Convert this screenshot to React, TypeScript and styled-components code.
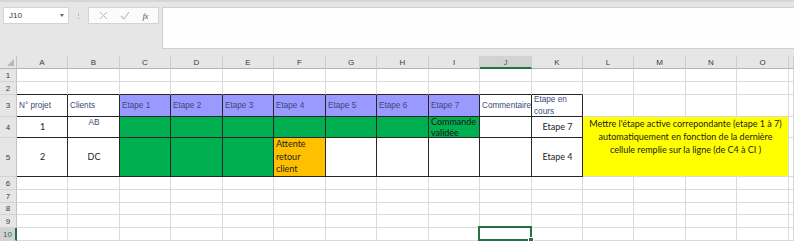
import React from 'react';
import styled, { createGlobalStyle, css } from 'styled-components';

const GlobalStyle = createGlobalStyle`
  html, body { margin: 0; padding: 0; background: #e6e6e6; }
  body { font-family: "Liberation Sans", Arial, sans-serif; }
`;

const COLS = ['A', 'B', 'C', 'D', 'E', 'F', 'G', 'H', 'I', 'J', 'K', 'L', 'M', 'N', 'O', 'P'];
const COL_WIDTHS = [51, 52, 51, 52, 51, 52, 51, 52, 51, 52, 51, 51, 52, 51, 52];
const ROW_HEIGHTS = [13, 13, 22, 21, 39, 13, 13, 12, 13, 13];

const GRID = '#dadada';
const DARK = '#262626';
const HEAD_TXT = '#3b4a78';
const GREEN = '#217346';

type HAlign = 'left' | 'center' | 'right';
type VAlign = 'top' | 'center' | 'bottom';

interface Spec {
  text?: string;
  fill?: string;
  font?: 'arial' | 'calibri';
  h?: HAlign;
  v?: VAlign;
  color?: string;
  lh?: number;
}

const LAV = '#9999ff';
const GRN = '#00b050';
const ORA = '#ffc000';

const hdr = (text: string): Spec => ({ text, font: 'arial', h: 'left', v: 'center', color: HEAD_TXT });

const SPECS: Record<string, Spec> = {
  A3: hdr('N° projet'),
  B3: hdr('Clients'),
  C3: { ...hdr('Etape 1'), fill: LAV },
  D3: { ...hdr('Etape 2'), fill: LAV },
  E3: { ...hdr('Etape 3'), fill: LAV },
  F3: { ...hdr('Etape 4'), fill: LAV },
  G3: { ...hdr('Etape 5'), fill: LAV },
  H3: { ...hdr('Etape 6'), fill: LAV },
  I3: { ...hdr('Etape 7'), fill: LAV },
  J3: hdr('Commentaire'),
  K3: hdr('Etape en\ncours'),
  A4: { text: '1', font: 'calibri', h: 'center', v: 'center', color: '#222' },
  B4: { text: 'AB', font: 'arial', h: 'center', v: 'top', color: HEAD_TXT },
  C4: { fill: GRN },
  D4: { fill: GRN },
  E4: { fill: GRN },
  F4: { fill: GRN },
  G4: { fill: GRN },
  H4: { fill: GRN },
  I4: { text: 'Commande\nvalidée', fill: GRN, font: 'calibri', h: 'left', v: 'top', color: '#141414', lh: 10.5 },
  K4: { text: 'Etape 7', font: 'calibri', h: 'center', v: 'center', color: '#222' },
  A5: { text: '2', font: 'calibri', h: 'center', v: 'center', color: '#222' },
  B5: { text: 'DC', font: 'calibri', h: 'center', v: 'center', color: '#222' },
  C5: { fill: GRN },
  D5: { fill: GRN },
  E5: { fill: GRN },
  F5: { text: 'Attente\nretour\nclient', fill: ORA, font: 'calibri', h: 'left', v: 'top', color: '#1c1c1c' },
  K5: { text: 'Etape 4', font: 'calibri', h: 'center', v: 'center', color: '#222' },
};

const Page = styled.div`
  width: 794px;
  height: 241px;
  overflow: hidden;
  background: #e6e6e6;
`;

const TopBar = styled.div`
  height: 56px;
  box-sizing: border-box;
  border-top: 2px solid #d5d5d5;
  padding-top: 5px;
  display: flex;
  align-items: flex-start;
`;

const NameBox = styled.div`
  margin-left: 3px;
  width: 66px;
  height: 17px;
  box-sizing: border-box;
  background: #ffffff;
  border: 1px solid #d3d3d3;
  display: flex;
  align-items: center;
  justify-content: space-between;
  padding: 0 4px 0 5px;
  font-size: 8px;
  color: #333;
`;

const Caret = styled.span`
  width: 0;
  height: 0;
  border-left: 2.5px solid transparent;
  border-right: 2.5px solid transparent;
  border-top: 3px solid #666;
`;

const Dots = styled.div`
  width: 19px;
  height: 17px;
  display: flex;
  flex-direction: column;
  align-items: center;
  justify-content: center;
  gap: 1.5px;
  & > span {
    width: 1px;
    height: 1px;
    background: #a8a8a8;
  }
`;

const FxBox = styled.div`
  width: 71px;
  height: 17px;
  box-sizing: border-box;
  background: #fbfbfb;
  border: 1px solid #d3d3d3;
  display: flex;
  align-items: center;
  justify-content: space-around;
  padding: 0 4px;
`;

const Fx = styled.span`
  font-family: "Liberation Serif", serif;
  font-style: italic;
  font-size: 9px;
  color: #555;
  letter-spacing: -0.5px;
`;

const FormulaInput = styled.div`
  margin-left: 3px;
  flex: 1;
  height: 42px;
  box-sizing: border-box;
  background: #fdfefd;
  border: 1px solid #d0d0d0;
  border-right: none;
`;

const Sheet = styled.div`
  display: grid;
  grid-template-columns: 17px ${COL_WIDTHS.map((w) => `${w}px`).join(' ')} 1fr;
  grid-template-rows: 13px ${ROW_HEIGHTS.map((h) => `${h}px`).join(' ')} 1fr;
  background: #ffffff;
`;

const HeaderBase = css`
  box-sizing: border-box;
  background: #e6e6e6;
  font-family: "Liberation Sans", Arial, sans-serif;
  font-size: 8px;
  color: #3a3a3a;
  display: flex;
  align-items: center;
  justify-content: center;
  overflow: hidden;
`;

const Corner = styled.div`
  ${HeaderBase};
  position: relative;
  border-right: 1px solid #c4c4c4;
  border-bottom: 1px solid #b4b4b4;
  &::after {
    content: '';
    position: absolute;
    right: 2px;
    bottom: 2px;
    width: 0;
    height: 0;
    border-left: 7px solid transparent;
    border-bottom: 7px solid #b8b8b8;
  }
`;

const ColHead = styled.div<{ $active?: boolean }>`
  ${HeaderBase};
  border-right: 1px solid #cdcdcd;
  border-bottom: 1px solid #b4b4b4;
  padding-top: 1px;
  ${(p) =>
    p.$active &&
    css`
      background: #d2d2d2;
      color: ${GREEN};
      border-bottom: 2px solid ${GREEN};
    `}
`;

const RowHead = styled.div<{ $active?: boolean }>`
  ${HeaderBase};
  border-right: 1px solid #c4c4c4;
  border-bottom: 1px solid #d4d4d4;
  ${(p) =>
    p.$active &&
    css`
      background: #d2d2d2;
      color: ${GREEN};
      border-right: 2px solid ${GREEN};
    `}
`;

const Cell = styled.div<{
  $fill?: string;
  $rb: string;
  $bb: string;
  $font: 'arial' | 'calibri';
  $h: HAlign;
  $v: VAlign;
  $color: string;
  $lh?: number;
  $selected?: boolean;
}>`
  position: relative;
  box-sizing: border-box;
  background: ${(p) => p.$fill || '#ffffff'};
  border-right: 1px solid ${(p) => p.$rb};
  border-bottom: 1px solid ${(p) => p.$bb};
  display: flex;
  flex-direction: column;
  justify-content: ${(p) => (p.$v === 'top' ? 'flex-start' : p.$v === 'center' ? 'center' : 'flex-end')};
  align-items: ${(p) => (p.$h === 'left' ? 'flex-start' : p.$h === 'center' ? 'center' : 'flex-end')};
  padding: 0 1px 0 2px;
  white-space: pre-line;
  overflow: hidden;
  color: ${(p) => p.$color};
  ${(p) =>
    p.$font === 'arial'
      ? css`
          font-family: "Liberation Sans", Arial, sans-serif;
          font-size: 8.2px;
          line-height: 12px;
        `
      : css`
          font-family: Lato, "Open Sans", sans-serif;
          font-size: 9px;
          line-height: ${p.$lh ? `${p.$lh}px` : '12.5px'};
        `}
  ${(p) =>
    p.$selected &&
    css`
      overflow: visible;
      &::after {
        content: '';
        position: absolute;
        left: -2px;
        top: -2px;
        right: -1px;
        bottom: -1px;
        border: 2px solid ${GREEN};
      }
      &::before {
        content: '';
        position: absolute;
        right: -3px;
        bottom: -3px;
        width: 4px;
        height: 4px;
        background: ${GREEN};
        border: 1px solid #fff;
        z-index: 2;
      }
    `}
`;

const Note = styled.div`
  grid-column: 13 / span 4;
  grid-row: 5 / span 2;
  box-sizing: border-box;
  background: #ffff00;
  border-right: 1px solid ${GRID};
  border-bottom: 1px solid ${GRID};
  display: flex;
  flex-direction: column;
  align-items: center;
  font-family: Lato, "Open Sans", sans-serif;
  font-size: 9px;
  line-height: 13px;
  color: #1a1a1a;
  text-align: center;
`;

const XIcon = () => (
  <svg width="9" height="9" viewBox="0 0 9 9">
    <path d="M1 1 L8 8 M8 1 L1 8" stroke="#b9b9b9" strokeWidth="1" fill="none" />
  </svg>
);

const CheckIcon = () => (
  <svg width="10" height="9" viewBox="0 0 10 9">
    <path d="M1 5 L4 8 L9 1" stroke="#b9b9b9" strokeWidth="1.1" fill="none" />
  </svg>
);

const NOTE_SPAN = new Set(['L4', 'M4', 'N4', 'O4', 'L5', 'M5', 'N5', 'O5']);

function borderFor(ci: number, row: number) {
  const inBox = ci <= 10 && row >= 3 && row <= 5;
  const rb = inBox ? DARK : GRID;
  const bb = inBox || (ci <= 10 && row === 2) ? DARK : GRID;
  return { rb, bb };
}

export default function App() {
  const rows = Array.from({ length: 11 }, (_, i) => i + 1);
  return (
    <Page>
      <GlobalStyle />
      <TopBar>
        <NameBox>
          <span>J10</span>
          <Caret />
        </NameBox>
        <Dots>
          <span />
          <span />
          <span />
        </Dots>
        <FxBox>
          <XIcon />
          <CheckIcon />
          <Fx>fx</Fx>
        </FxBox>
        <FormulaInput />
      </TopBar>
      <Sheet>
        <Corner />
        {COLS.map((c) => (
          <ColHead key={c} $active={c === 'J'}>
            {c === 'P' ? '' : c}
          </ColHead>
        ))}
        <Note>
          <span>Mettre l'étape active correpondante (etape 1 à 7)</span>
          <span>automatiquement en fonction de la dernière</span>
          <span>cellule remplie sur la ligne (de C4 à CI )</span>
        </Note>
        {rows.map((r) => (
          <React.Fragment key={r}>
            <RowHead $active={r === 10}>{r <= 10 ? r : ''}</RowHead>
            {COLS.map((c, ci) => {
              const id = `${c}${r}`;
              if (NOTE_SPAN.has(id)) return null;
              const s = SPECS[id] || {};
              const { rb, bb } = borderFor(ci, r);
              return (
                <Cell
                  key={id}
                  $fill={s.fill}
                  $rb={rb}
                  $bb={bb}
                  $font={s.font || 'calibri'}
                  $h={s.h || 'left'}
                  $v={s.v || 'bottom'}
                  $color={s.color || '#222'}
                  $lh={s.lh}
                  $selected={id === 'J10'}
                >
                  {s.text}
                </Cell>
              );
            })}
          </React.Fragment>
        ))}
      </Sheet>
    </Page>
  );
}
